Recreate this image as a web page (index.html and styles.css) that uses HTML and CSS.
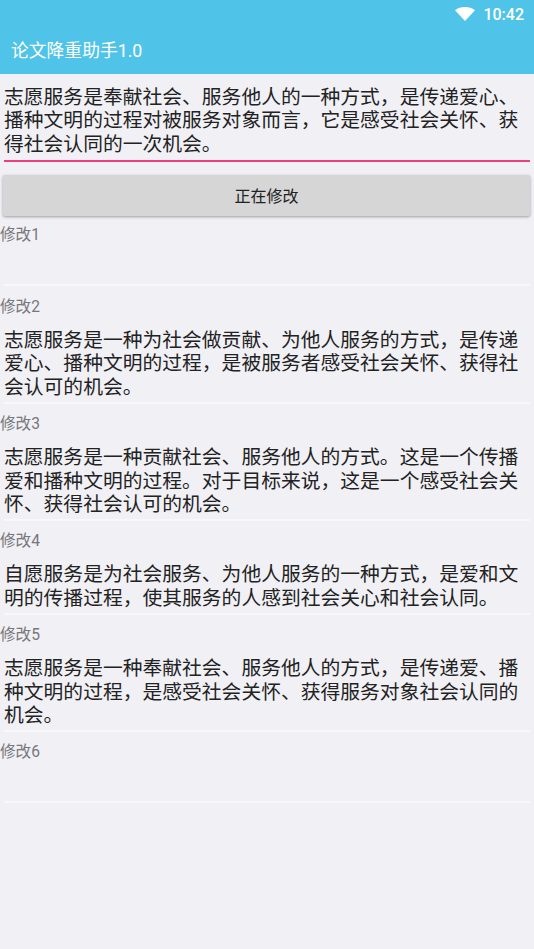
FILE: index.html
```html
<!DOCTYPE html>
<html lang="zh-CN">
<head>
    <meta charset="UTF-8">
    <meta name="viewport" content="width=device-width, initial-scale=1.0">
    <title>论文降重助手1.0</title>
    <link rel="stylesheet" href="styles.css">
</head>
<body>
    <div class="status-bar">
        <svg class="wifi" width="20" height="14" viewBox="0 0 20 14">
            <path d="M0 3.2C2.8 1.1 6.2 0 10 0s7.2 1.100 10 3.200L10 14z" fill="#fff"/>
        </svg>
        <span class="time">10:42</span>
    </div>
    <div class="app-bar">论文降重助手1.0</div>

    <div class="input-box">
        <p class="input-text">志愿服务是奉献社会、服务他人的一种方式，是传递爱心、播种文明的过程对被服务对象而言，它是感受社会关怀、获得社会认同的一次机会。</p>
    </div>
    <button class="btn">正在修改</button>

    <div class="result">
        <div class="label">修改1</div>
        <div class="field empty"></div>
    </div>
    <div class="result">
        <div class="label">修改2</div>
        <div class="field">志愿服务是一种为社会做贡献、为他人服务的方式，是传递爱心、播种文明的过程，是被服务者感受社会关怀、获得社会认可的机会。</div>
    </div>
    <div class="result">
        <div class="label">修改3</div>
        <div class="field">志愿服务是一种贡献社会、服务他人的方式。这是一个传播爱和播种文明的过程。对于目标来说，这是一个感受社会关怀、获得社会认可的机会。</div>
    </div>
    <div class="result">
        <div class="label">修改4</div>
        <div class="field">自愿服务是为社会服务、为他人服务的一种方式，是爱和文明的传播过程，使其服务的人感到社会关心和社会认同。</div>
    </div>
    <div class="result">
        <div class="label">修改5</div>
        <div class="field">志愿服务是一种奉献社会、服务他人的方式，是传递爱、播种文明的过程，是感受社会关怀、获得服务对象社会认同的机会。</div>
    </div>
    <div class="result">
        <div class="label">修改6</div>
        <div class="field empty"></div>
    </div>
</body>
</html>
```

FILE: styles.css
```css
* {
    margin: 0;
    padding: 0;
    box-sizing: border-box;
}

body {
    width: 534px;
    height: 949px;
    overflow: hidden;
    background: #f0f0f5;
    font-family: "Roboto", "Noto Sans CJK SC", sans-serif;
    color: #222;
}

.status-bar {
    height: 28px;
    background: #4fc3e8;
    display: flex;
    align-items: center;
    justify-content: flex-end;
    padding-right: 10px;
    color: #fff;
    font-size: 16px;
    font-weight: 500;
}

.wifi {
    margin-right: 8px;
}

.app-bar {
    height: 46px;
    background: #4fc3e8;
    color: #fff;
    font-size: 17.8px;
    line-height: 46px;
    padding-left: 11px;
}

.input-box {
    margin: 0 4px;
    padding-top: 12px;
    height: 88px;
    border-bottom: 2px solid #ec407a;
}

.input-text,
.field {
    font-size: 19.8px;
    line-height: 23.4px;
}

.btn {
    display: block;
    width: 527px;
    height: 41px;
    margin: 13px 0 0 3px;
    padding-bottom: 2px;
    border: none;
    border-radius: 2px;
    background: #d6d6d6;
    box-shadow: 0 1px 3px rgba(0, 0, 0, 0.35);
    color: #222;
    font-family: inherit;
    font-size: 16px;
}

.label {
    color: #77777c;
    font-size: 15.6px;
    line-height: 20px;
    padding-top: 9px;
    height: 29px;
}

.field {
    margin: 0 4px 1px;
    padding-top: 12px;
    padding-bottom: 3px;
    border-bottom: 2px solid #f8f8fb;
}

.field.empty {
    height: 41px;
    margin-bottom: 2px;
}
```
